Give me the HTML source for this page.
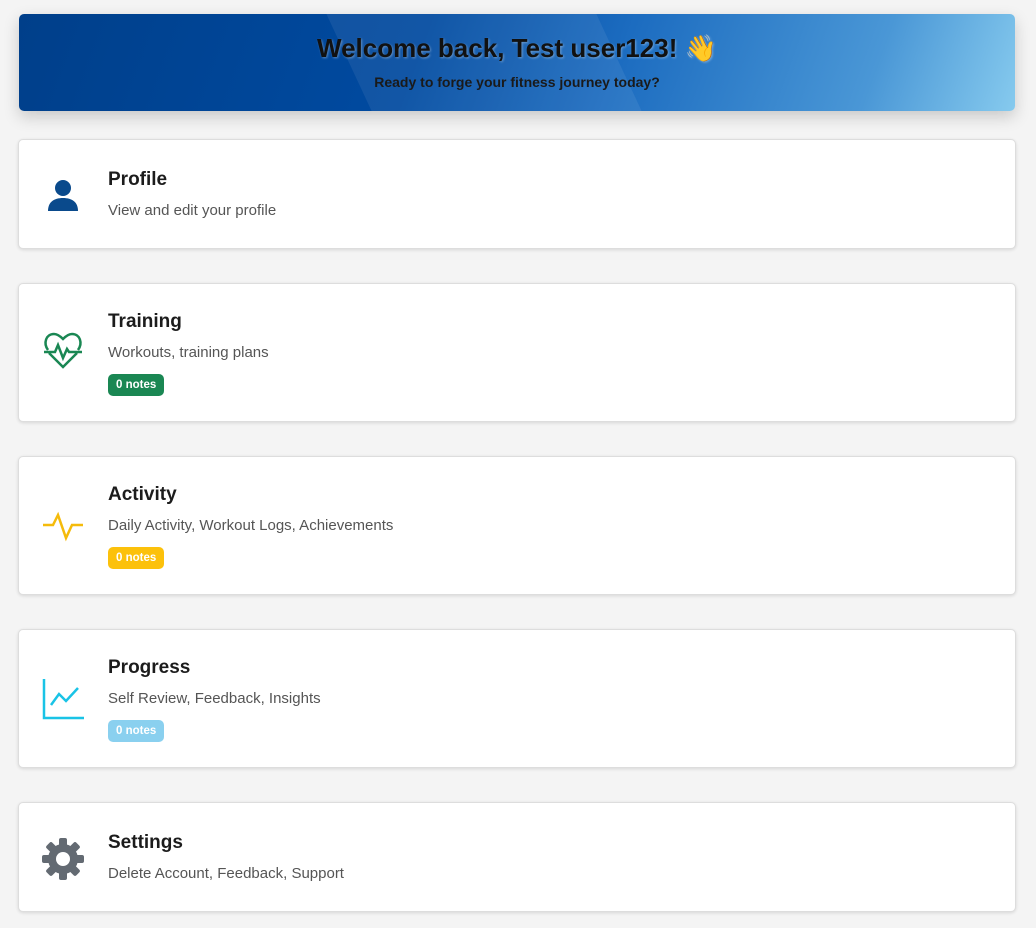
<!DOCTYPE html>
<html><head><meta charset="utf-8"><style>
body{margin:0;background:#f4f4f4;font-family:"Liberation Sans",sans-serif;width:1036px;height:928px;overflow:hidden;position:relative}
.hdr{position:absolute;left:19px;top:14px;width:996px;height:97px;border-radius:5px;
background:linear-gradient(110deg,#003f8a 0%,#004aa0 40%,#1c6cc0 60%,#4a97d6 85%,#86caee 100%);
box-shadow:0 6px 16px rgba(0,0,0,.18);overflow:hidden;text-align:center}
.hdr:before{content:"";position:absolute;left:330px;top:0;width:270px;height:100%;background:rgba(255,255,255,.07);transform:skewX(25deg)}
.hdr h1{position:relative;margin:0;padding-top:19px;font-size:26px;font-weight:bold;color:#111;text-shadow:1px 1px 2px rgba(255,255,255,.35)}
.hdr p{position:relative;margin:10px 0 0;font-size:14px;font-weight:bold;color:#1a1a1a}
.card{position:absolute;left:18px;width:996px;background:#fff;border:1px solid #ddd;border-radius:5px;box-shadow:0 1px 3px rgba(0,0,0,.12)}
.ic{position:absolute;left:22px;width:44px;height:44px}
.t{position:absolute;left:89px;font-size:19px;font-weight:bold;color:#1c1c1c}
.d{position:absolute;left:89px;font-size:15px;color:#555}
.b{position:absolute;left:89px;height:22px;line-height:22px;padding:0 8px;border-radius:5px;font-size:11.5px;font-weight:bold;color:#fff}
</style></head><body>
<div class="hdr"><h1>Welcome back, Test user123! 👋</h1><p>Ready to forge your fitness journey today?</p></div>

<div class="card" style="top:139px;height:108px">
<svg class="ic" style="top:34px" viewBox="0 0 44 44"><circle cx="22" cy="14" r="8" fill="#0a4a8c"/><path d="M7 37c0-9 6-13 15-13s15 4 15 13z" fill="#0a4a8c"/></svg>
<div class="t" style="top:29px">Profile</div><div class="d" style="top:62px">View and edit your profile</div></div>

<div class="card" style="top:283px;height:137px">
<svg class="ic" style="top:45px" viewBox="0 0 44 44"><path d="M7 21C2 14 5 5 13 5c4 0 7 3 9 5 2-2 5-5 9-5 8 0 11 9 6 16M8 24l14 14 14-14" fill="none" stroke="#1a8753" stroke-width="2.5"/><path d="M3 23h11l3-7 5 13 4-9 2 3h13" fill="none" stroke="#1a8753" stroke-width="2.5"/></svg>
<div class="t" style="top:27px">Training</div><div class="d" style="top:60px">Workouts, training plans</div>
<div class="b" style="top:90px;background:#1a8753">0 notes</div></div>

<div class="card" style="top:456px;height:137px">
<svg class="ic" style="top:46px" viewBox="0 0 44 44"><path d="M2 22h10l5-10 8 23 6-13h11" fill="none" stroke="#f5bb0b" stroke-width="2.5"/></svg>
<div class="t" style="top:27px">Activity</div><div class="d" style="top:60px">Daily Activity, Workout Logs, Achievements</div>
<div class="b" style="top:90px;background:#fcc10b">0 notes</div></div>

<div class="card" style="top:629px;height:137px">
<svg class="ic" style="top:47px" viewBox="0 0 44 44"><path d="M3 2v39h40" fill="none" stroke="#19c3e6" stroke-width="2.5"/><path d="M10 28l8-11 7 7 12-13" fill="none" stroke="#19c3e6" stroke-width="2.5"/></svg>
<div class="t" style="top:27px">Progress</div><div class="d" style="top:60px">Self Review, Feedback, Insights</div>
<div class="b" style="top:90px;background:#8ad0ef">0 notes</div></div>

<div class="card" style="top:802px;height:108px">
<svg class="ic" style="top:34px" viewBox="0 0 44 44"><g fill="#636a72" transform="translate(22 22)"><circle r="15"/><g id="t"><rect x="-4" y="-21" width="8" height="9" rx="2"/></g><use href="#t" transform="rotate(45)"/><use href="#t" transform="rotate(90)"/><use href="#t" transform="rotate(135)"/><use href="#t" transform="rotate(180)"/><use href="#t" transform="rotate(225)"/><use href="#t" transform="rotate(270)"/><use href="#t" transform="rotate(315)"/><circle r="7" fill="#fff"/></g></svg>
<div class="t" style="top:29px">Settings</div><div class="d" style="top:62px">Delete Account, Feedback, Support</div></div>
</body></html>
